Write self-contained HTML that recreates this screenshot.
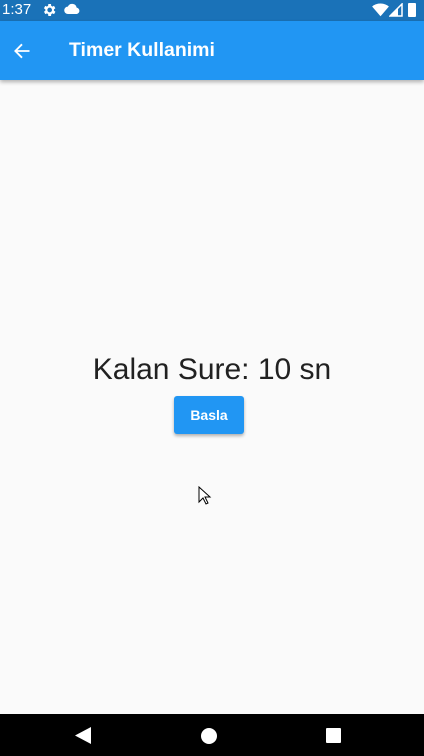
<!DOCTYPE html>
<html><head><meta charset="utf-8"><style>
*{margin:0;padding:0;box-sizing:border-box}
body{width:424px;height:756px;background:#fafafa;font-family:"Liberation Sans",sans-serif;position:relative;overflow:hidden}
.sb{position:absolute;top:0;left:0;width:424px;height:21px;background:#1a72b8;color:#fff}
.ab{position:absolute;top:21px;left:0;width:424px;height:59px;background:#2196f3;box-shadow:0 2px 4px rgba(0,0,0,.3)}
.nav{position:absolute;bottom:0;left:0;width:424px;height:42px;background:#000}
</style></head><body>
<div class="sb">
<span style="position:absolute;left:2px;top:1px;font-size:15px">1:37</span>
<svg style="position:absolute;left:41px;top:2px" width="16" height="16" viewBox="0 0 24 24"><path fill="#fff" d="M19.4 13a7.5 7.5 0 000-2l2.1-1.6-2-3.5-2.5 1a7 7 0 00-1.7-1L15 3h-4l-.4 2.9a7 7 0 00-1.7 1l-2.5-1-2 3.5L6.6 11a7.5 7.5 0 000 2l-2.1 1.6 2 3.5 2.5-1a7 7 0 001.7 1L11 21h4l.4-2.9a7 7 0 001.7-1l2.5 1 2-3.5zM13 15.5a3.5 3.5 0 110-7 3.5 3.5 0 010 7z"/></svg>
<svg style="position:absolute;left:64px;top:3px" width="16" height="12" viewBox="0 0 24 16"><path fill="#fff" d="M19 6A7 7 0 005.7 4.5 5.5 5.5 0 006 15.5h13a4.8 4.8 0 000-9.5z"/></svg>
<svg style="position:absolute;left:372px;top:3px" width="17" height="14" viewBox="0 0 24 20"><path fill="#fff" d="M12 19L0 5a19 19 0 0124 0z"/></svg>
<svg style="position:absolute;left:389px;top:3px" width="14" height="14" viewBox="0 0 14 14"><path fill="none" stroke="#fff" stroke-width="1.5" d="M1 13L13 1V13Z"/><path fill="#fff" d="M1 13L9 5V13Z"/></svg>
<div style="position:absolute;left:408px;top:3px;width:8px;height:14px;background:#fff;border-radius:1px"></div>
</div>
<div class="ab">
<svg style="position:absolute;left:12px;top:20px" width="20" height="20" viewBox="0 0 24 24"><path fill="none" stroke="#fff" stroke-width="2.2" d="M21 12H4M12 4l-8 8 8 8"/></svg>
<span style="position:absolute;left:69px;top:18px;color:#fff;font-size:19.5px;font-weight:bold">Timer Kullanimi</span>
</div>
<div style="position:absolute;top:353px;left:0;width:424px;text-align:center;font-size:30px;color:#212121">Kalan Sure: 10 sn</div>
<div style="position:absolute;left:174px;top:396px;width:70px;height:38px;background:#2196f3;border-radius:3px;box-shadow:0 2px 3px rgba(0,0,0,.3);color:#fff;font-size:14px;font-weight:bold;text-align:center;line-height:38px">Basla</div>
<svg style="position:absolute;left:198px;top:486px" width="14" height="20" viewBox="0 0 14 20"><path fill="#fff" stroke="#000" d="M1 1v15l4-4 3 6 2-1-3-6h5z"/></svg>
<div class="nav">
<svg style="position:absolute;left:75px;top:13px" width="16" height="17"><path fill="#fff" d="M16 0v17L0 8.5z"/></svg>
<div style="position:absolute;left:201px;top:14px;width:16px;height:16px;border-radius:50%;background:#fff"></div>
<div style="position:absolute;left:326px;top:14px;width:15px;height:15px;background:#fff;border-radius:1px"></div>
</div>
</body></html>
